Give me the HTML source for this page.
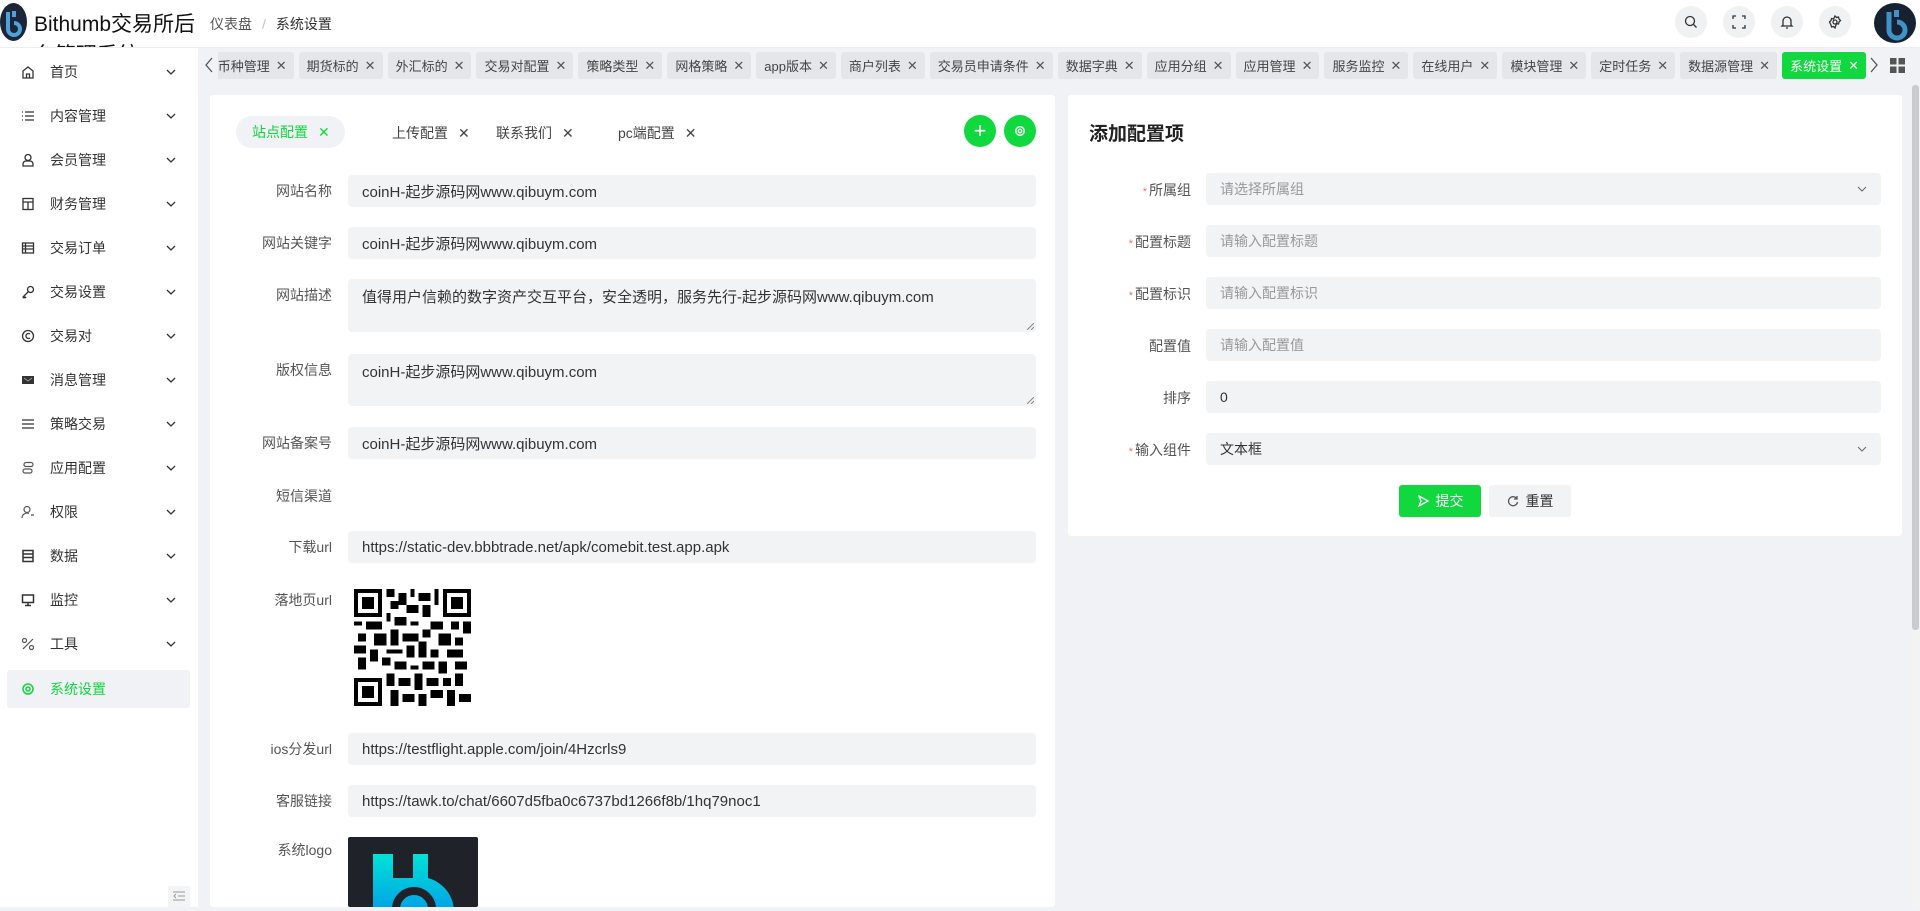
<!DOCTYPE html>
<html><head><meta charset="utf-8">
<style>
*{box-sizing:border-box;margin:0;padding:0}
body{width:1920px;height:907px;overflow:hidden;background:#f0f2f5;font-family:"Liberation Sans","Noto Sans CJK SC",sans-serif;position:relative;color:#303133}
.abs{position:absolute}
#hdr{left:0;top:0;width:1920px;height:48px;background:#fff;border-bottom:1px solid #eee;overflow:hidden}
.title{left:34px;top:9px;width:170px;font-size:21px;line-height:31px;color:#111}
.bc{left:210px;top:14px;font-size:14px;color:#555}
.bc span{color:#c0c4cc;margin:0 10px}
.bc b{font-weight:normal;color:#303133}
.hic{width:32px;height:32px;border-radius:50%;background:#f0f1f3;top:6px;display:flex;align-items:center;justify-content:center}
#side{left:0;top:48px;width:198px;height:859px;background:#fff}
.mi{position:absolute;left:7px;width:183px;height:38px;display:flex;align-items:center;font-size:14px;color:#333}
.mi svg.ic{position:absolute;left:14px}
.mi .t{position:absolute;left:43px}
.mi .ch{position:absolute;left:158px}
.mi.act{background:#f0f2f5;border-radius:3px;color:#10d83e}
#tabs{left:218px;top:52px;width:1648px;height:27px;overflow:hidden;display:flex;justify-content:flex-end;gap:5px}
.tab{flex:none;height:27px;background:#e4e6ea;border-radius:3px;display:flex;align-items:center;padding:0 7px 0 8px;font-size:13px;color:#444;white-space:nowrap}
.tab i{font-style:normal;margin-left:6px;font-size:13px;color:#555}
.tab.on{background:#10d83e;color:#fff}.tab.on i{color:#fff}
.card{background:#fff;border-radius:3px}
.lbl{position:absolute;font-size:14px;color:#555;text-align:right;width:120px}
.inp{position:absolute;background:#f2f3f5;border-radius:4px;font-size:15px;color:#333;padding-left:14px;display:flex;align-items:center;white-space:nowrap}
.ta{align-items:flex-start;padding-top:7px}
.ph{color:#999;font-size:14px}
.star{color:#f56c6c;font-size:11px;margin-right:2px}
.rh{position:absolute;right:2px;bottom:2px}
</style></head><body>

<div id="hdr" class="abs">
  <svg class="abs" style="left:0;top:3px" width="27" height="38" viewBox="0 0 27 38"><ellipse cx="13.5" cy="19" rx="13.5" ry="19" fill="#1c2638"/><path d="M8 9v17a6 6 0 1 0 6-6" fill="none" stroke="#4da3d9" stroke-width="4"/><rect x="12" y="8" width="4" height="6" fill="#4da3d9"/></svg>
  <div class="abs title">Bithumb交易所后台管理系统</div>
  <div class="abs bc">仪表盘<span>/</span><b>系统设置</b></div>
  <div class="abs hic" style="left:1675px"><svg width="14" height="14" viewBox="0 0 14 14" fill="none" stroke="#333" stroke-width="1.3"><circle cx="6" cy="6" r="4.5"/><path d="M9.5 9.5l3 3"/></svg></div>
  <div class="abs hic" style="left:1723px"><svg width="14" height="14" viewBox="0 0 14 14" fill="none" stroke="#333" stroke-width="1.3"><path d="M1 4V1h3M10 1h3v3M13 10v3h-3M4 13H1v-3"/></svg></div>
  <div class="abs hic" style="left:1771px"><svg width="14" height="14" viewBox="0 0 14 14" fill="none" stroke="#333" stroke-width="1.3"><path d="M3 10V6a4 4 0 0 1 8 0v4l1 1H2zM6 13h2"/></svg></div>
  <div class="abs hic" style="left:1819px"><svg width="14" height="14" viewBox="0 0 14 14" fill="none" stroke="#333" stroke-width="1.3"><circle cx="7" cy="7" r="2"/><path d="M7 1l1.5 1.5 2-.5.5 2 1.5 1.5-1.5 1.5-.5 2-2-.5L7 13l-1.5-1.5-2 .5-.5-2L1.5 7 3 5.5l.5-2 2 .5z"/></svg></div>
  <svg class="abs" style="left:1872px;top:2px" width="46" height="42" viewBox="0 0 46 42"><ellipse cx="23" cy="21" rx="21" ry="20" fill="#162232"/><path d="M17 10v18a8 8 0 1 0 8-8" fill="none" stroke="#3f93c8" stroke-width="5"/><rect x="22" y="8" width="5" height="7" fill="#3f93c8"/></svg>
</div>

<div id="side" class="abs">
  <div class="mi" style="top:5px"><svg class="ic" width="14" height="14" viewBox="0 0 14 14" fill="none" stroke="#333" stroke-width="1.3"><path d="M2 13V6l5-4 5 4v7zM5.5 13V9h3v4"/></svg><span class="t">首页</span><svg class="ch" width="12" height="12" viewBox="0 0 12 12" fill="none" stroke="#333" stroke-width="1.3"><path d="M2 4l4 4 4-4"/></svg></div>
  <div class="mi" style="top:49px"><svg class="ic" width="14" height="14" viewBox="0 0 14 14" fill="none" stroke="#333" stroke-width="1.3"><path d="M1 3h1M1 7h1M1 11h1M4 3h9M4 7h9M4 11h9"/></svg><span class="t">内容管理</span><svg class="ch" width="12" height="12" viewBox="0 0 12 12" fill="none" stroke="#333" stroke-width="1.3"><path d="M2 4l4 4 4-4"/></svg></div>
  <div class="mi" style="top:93px"><svg class="ic" width="14" height="14" viewBox="0 0 14 14" fill="none" stroke="#333" stroke-width="1.3"><circle cx="7" cy="4.5" r="3"/><path d="M2 13v-2a3 3 0 0 1 3-3h4a3 3 0 0 1 3 3v2z"/></svg><span class="t">会员管理</span><svg class="ch" width="12" height="12" viewBox="0 0 12 12" fill="none" stroke="#333" stroke-width="1.3"><path d="M2 4l4 4 4-4"/></svg></div>
  <div class="mi" style="top:137px"><svg class="ic" width="14" height="14" viewBox="0 0 14 14" fill="none" stroke="#333" stroke-width="1.3"><rect x="2" y="1.5" width="10" height="11"/><path d="M2 5h10M7 5v7.5"/></svg><span class="t">财务管理</span><svg class="ch" width="12" height="12" viewBox="0 0 12 12" fill="none" stroke="#333" stroke-width="1.3"><path d="M2 4l4 4 4-4"/></svg></div>
  <div class="mi" style="top:181px"><svg class="ic" width="14" height="14" viewBox="0 0 14 14" fill="none" stroke="#333" stroke-width="1.3"><rect x="1.5" y="2" width="11" height="10"/><path d="M1.5 5h11M1.5 8h11M4.5 2v10"/></svg><span class="t">交易订单</span><svg class="ch" width="12" height="12" viewBox="0 0 12 12" fill="none" stroke="#333" stroke-width="1.3"><path d="M2 4l4 4 4-4"/></svg></div>
  <div class="mi" style="top:225px"><svg class="ic" width="14" height="14" viewBox="0 0 14 14" fill="none" stroke="#333" stroke-width="1.3"><circle cx="9.5" cy="4.5" r="3"/><path d="M7.5 6.5L2 12l1 1 1-1 1 1"/></svg><span class="t">交易设置</span><svg class="ch" width="12" height="12" viewBox="0 0 12 12" fill="none" stroke="#333" stroke-width="1.3"><path d="M2 4l4 4 4-4"/></svg></div>
  <div class="mi" style="top:269px"><svg class="ic" width="14" height="14" viewBox="0 0 14 14" fill="none" stroke="#333" stroke-width="1.3"><circle cx="7" cy="7" r="5.5"/><path d="M9 5a2.5 2.5 0 1 0 0 4"/></svg><span class="t">交易对</span><svg class="ch" width="12" height="12" viewBox="0 0 12 12" fill="none" stroke="#333" stroke-width="1.3"><path d="M2 4l4 4 4-4"/></svg></div>
  <div class="mi" style="top:313px"><svg class="ic" width="14" height="14" viewBox="0 0 14 14"><rect x="1" y="3" width="12" height="8" fill="#333"/><path d="M3 5l4 3 4-3" fill="none" stroke="#999"/></svg><span class="t">消息管理</span><svg class="ch" width="12" height="12" viewBox="0 0 12 12" fill="none" stroke="#333" stroke-width="1.3"><path d="M2 4l4 4 4-4"/></svg></div>
  <div class="mi" style="top:357px"><svg class="ic" width="14" height="14" viewBox="0 0 14 14" fill="none" stroke="#333" stroke-width="1.3"><path d="M1 3h12M1 7h12M1 11h12"/></svg><span class="t">策略交易</span><svg class="ch" width="12" height="12" viewBox="0 0 12 12" fill="none" stroke="#333" stroke-width="1.3"><path d="M2 4l4 4 4-4"/></svg></div>
  <div class="mi" style="top:401px"><svg class="ic" width="14" height="14" viewBox="0 0 14 14" fill="none" stroke="#555" stroke-width="1.2"><rect x="3" y="1.5" width="9" height="4" rx="2"/><rect x="2" y="8" width="9" height="4" rx="2"/></svg><span class="t">应用配置</span><svg class="ch" width="12" height="12" viewBox="0 0 12 12" fill="none" stroke="#333" stroke-width="1.3"><path d="M2 4l4 4 4-4"/></svg></div>
  <div class="mi" style="top:445px"><svg class="ic" width="14" height="14" viewBox="0 0 14 14" fill="none" stroke="#555" stroke-width="1.2"><circle cx="6" cy="4.5" r="3"/><path d="M1 13a5 5 0 0 1 7-4.5M10 10h3"/></svg><span class="t">权限</span><svg class="ch" width="12" height="12" viewBox="0 0 12 12" fill="none" stroke="#333" stroke-width="1.3"><path d="M2 4l4 4 4-4"/></svg></div>
  <div class="mi" style="top:489px"><svg class="ic" width="14" height="14" viewBox="0 0 14 14" fill="none" stroke="#333" stroke-width="1.5"><rect x="2" y="1.5" width="10" height="11"/><path d="M2 5h10M2 8.5h10"/></svg><span class="t">数据</span><svg class="ch" width="12" height="12" viewBox="0 0 12 12" fill="none" stroke="#333" stroke-width="1.3"><path d="M2 4l4 4 4-4"/></svg></div>
  <div class="mi" style="top:533px"><svg class="ic" width="14" height="14" viewBox="0 0 14 14" fill="none" stroke="#333" stroke-width="1.5"><rect x="1.5" y="2" width="11" height="7.5"/><path d="M7 9.5V12M4 12.5h6"/></svg><span class="t">监控</span><svg class="ch" width="12" height="12" viewBox="0 0 12 12" fill="none" stroke="#333" stroke-width="1.3"><path d="M2 4l4 4 4-4"/></svg></div>
  <div class="mi" style="top:577px"><svg class="ic" width="14" height="14" viewBox="0 0 14 14" fill="none" stroke="#555" stroke-width="1.2"><circle cx="3.5" cy="3.5" r="2"/><circle cx="10.5" cy="10.5" r="2"/><path d="M12 2L2 12"/></svg><span class="t">工具</span><svg class="ch" width="12" height="12" viewBox="0 0 12 12" fill="none" stroke="#333" stroke-width="1.3"><path d="M2 4l4 4 4-4"/></svg></div>
  <div class="mi act" style="top:622px"><svg class="ic" width="14" height="14" viewBox="0 0 14 14" fill="none" stroke="#10d83e" stroke-width="1.5"><circle cx="7" cy="7" r="2"/><circle cx="7" cy="7" r="5"/></svg><span class="t">系统设置</span></div>
  <div class="abs" style="left:168px;top:838px;width:22px;height:21px;background:#f3f4f6;border-radius:2px"><svg style="margin:5px" width="12" height="10" viewBox="0 0 12 10" fill="none" stroke="#999"><path d="M0 1h12M5 5h7M0 9h12M3 3L1 5l2 2"/></svg></div>
</div>

<svg class="abs" style="left:204px;top:56px" width="10" height="18" viewBox="0 0 10 18" fill="none" stroke="#555" stroke-width="1.3"><path d="M8 2L2 9l6 7"/></svg>
<div id="tabs" class="abs">
  <div class="tab">币种管理<i>✕</i></div><div class="tab">期货标的<i>✕</i></div><div class="tab">外汇标的<i>✕</i></div><div class="tab">交易对配置<i>✕</i></div><div class="tab">策略类型<i>✕</i></div><div class="tab">网格策略<i>✕</i></div><div class="tab">app版本<i>✕</i></div><div class="tab">商户列表<i>✕</i></div><div class="tab">交易员申请条件<i>✕</i></div><div class="tab">数据字典<i>✕</i></div><div class="tab">应用分组<i>✕</i></div><div class="tab">应用管理<i>✕</i></div><div class="tab">服务监控<i>✕</i></div><div class="tab">在线用户<i>✕</i></div><div class="tab">模块管理<i>✕</i></div><div class="tab">定时任务<i>✕</i></div><div class="tab">数据源管理<i>✕</i></div><div class="tab on">系统设置<i>✕</i></div>
</div>
<svg class="abs" style="left:1869px;top:56px" width="10" height="18" viewBox="0 0 10 18" fill="none" stroke="#555" stroke-width="1.3"><path d="M2 2l6 7-6 7"/></svg>
<svg class="abs" style="left:1890px;top:58px" width="15" height="15" viewBox="0 0 15 15" fill="#555"><rect width="6.5" height="6.5"/><rect x="8.5" width="6.5" height="6.5"/><rect y="8.5" width="6.5" height="6.5"/><rect x="8.5" y="8.5" width="6.5" height="6.5"/></svg>

<div class="abs" style="left:198px;top:79px;width:1722px;height:16px;background:#f0f2f5"></div>
<div class="abs" style="left:1911px;top:85px;width:9px;height:822px;background:#f3f3f3"><div style="margin-left:1px;width:7px;height:545px;background:#c8cbd0;border-radius:3px"></div></div>

<div class="abs card" style="left:210px;top:95px;width:845px;height:812px">
  <div class="abs" style="left:26px;top:21px;width:109px;height:32px;border-radius:16px;background:#f0f2f5;font-size:14px;color:#10d83e;display:flex;align-items:center;padding-left:16px">站点配置<span style="margin-left:10px">✕</span></div>
  <div class="abs" style="left:182px;top:28px;font-size:14px;color:#444">上传配置<span style="margin-left:10px">✕</span></div>
  <div class="abs" style="left:286px;top:28px;font-size:14px;color:#444">联系我们<span style="margin-left:10px">✕</span></div>
  <div class="abs" style="left:408px;top:28px;font-size:14px;color:#444">pc端配置<span style="margin-left:10px">✕</span></div>
  <div class="abs" style="left:754px;top:20px;width:32px;height:32px;border-radius:50%;background:#10d83e;color:#fff;font-size:22px;line-height:31px;text-align:center">+</div>
  <div class="abs" style="left:794px;top:20px;width:32px;height:32px;border-radius:50%;background:#10d83e;display:flex;align-items:center;justify-content:center"><svg width="12" height="12" viewBox="0 0 14 14" fill="none" stroke="#fff" stroke-width="1.6"><circle cx="7" cy="7" r="2"/><circle cx="7" cy="7" r="5"/></svg></div>
</div>
<div class="lbl" style="left:212px;top:181px">网站名称</div><div class="inp" style="left:348px;top:175px;width:688px;height:32px">coinH-起步源码网www.qibuym.com</div>
<div class="lbl" style="left:212px;top:233px">网站关键字</div><div class="inp" style="left:348px;top:227px;width:688px;height:32px">coinH-起步源码网www.qibuym.com</div>
<div class="lbl" style="left:212px;top:285px">网站描述</div><div class="inp ta" style="left:348px;top:279px;width:688px;height:53px">值得用户信赖的数字资产交互平台，安全透明，服务先行-起步源码网www.qibuym.com<svg class="rh" width="7" height="7" viewBox="0 0 7 7" stroke="#888"><path d="M7 0L0 7M7 4L4 7"/></svg></div>
<div class="lbl" style="left:212px;top:360px">版权信息</div><div class="inp ta" style="left:348px;top:354px;width:688px;height:52px">coinH-起步源码网www.qibuym.com<svg class="rh" width="7" height="7" viewBox="0 0 7 7" stroke="#888"><path d="M7 0L0 7M7 4L4 7"/></svg></div>
<div class="lbl" style="left:212px;top:433px">网站备案号</div><div class="inp" style="left:348px;top:427px;width:688px;height:32px">coinH-起步源码网www.qibuym.com</div>
<div class="lbl" style="left:212px;top:486px">短信渠道</div>
<div class="lbl" style="left:212px;top:537px">下载url</div><div class="inp" style="left:348px;top:531px;width:688px;height:32px">https://static-dev.bbbtrade.net/apk/comebit.test.app.apk</div>
<div class="lbl" style="left:212px;top:590px">落地页url</div>
<svg class="abs" style="left:354px;top:589px" width="117" height="117" viewBox="0 0 29 29" shape-rendering="crispEdges"><rect width="29" height="29" fill="#fff"/><g fill="#000"><path d="M0 0h7v7H0zM22 0h7v7h-7zM0 22h7v7H0z"/></g><g fill="#fff"><path d="M1 1h5v5H1zM23 1h5v5h-5zM1 23h5v5H1z"/></g><g fill="#000"><path d="M2 2h3v3H2zM24 2h3v3h-3zM2 24h3v3H2z"/><path d="M8 0h2v2H8zM11 1h2v3h-2zM14 0h1v2h-1zM16 1h3v2h-3zM20 0h1v4h-1zM9 3h2v2H9zM13 4h3v2h-3zM17 4h2v3h-2zM8 6h1v2H8zM0 8h2v1H0zM3 8h4v2H3zM10 7h3v2h-3zM14 8h2v1h-2zM19 8h3v2h-3zM24 8h2v2h-2zM27 8h2v3h-2zM1 11h2v2H1zM5 11h3v3H5zM9 10h2v4H9zM12 11h4v2h-4zM17 10h2v2h-2zM21 11h3v3h-3zM25 12h2v2h-2zM0 14h3v2H0zM4 15h2v3H4zM8 15h4v1H8zM13 14h2v3h-2zM16 13h2v4h-2zM19 15h2v2h-2zM23 15h4v2h-4zM1 17h2v3H1zM7 17h2v2H7zM10 18h3v2h-3zM14 19h2v1h-2zM17 18h3v2h-3zM21 18h2v3h-2zM25 18h3v2h-3zM8 21h2v3H8zM11 22h3v2h-3zM15 21h2v4h-2zM18 22h3v2h-3zM22 22h2v2h-2zM25 21h2v3h-2zM9 25h2v4H9zM12 26h3v2h-3zM16 26h2v3h-2zM19 25h3v2h-3zM23 25h2v4h-2zM26 26h3v2h-3z"/></g></svg>
<div class="lbl" style="left:212px;top:739px">ios分发url</div><div class="inp" style="left:348px;top:733px;width:688px;height:32px">https://testflight.apple.com/join/4Hzcrls9</div>
<div class="lbl" style="left:212px;top:791px">客服链接</div><div class="inp" style="left:348px;top:785px;width:688px;height:32px">https://tawk.to/chat/6607d5fba0c6737bd1266f8b/1hq79noc1</div>
<div class="lbl" style="left:212px;top:840px">系统logo</div>
<div class="abs" style="left:348px;top:837px;width:130px;height:70px;background:#1f2229;border-radius:2px;overflow:hidden">
<svg width="130" height="70" viewBox="0 0 130 70"><defs><linearGradient id="g" x1="0" y1="0" x2="0" y2="1"><stop offset="0" stop-color="#00e3d6"/><stop offset="1" stop-color="#00a2e6"/></linearGradient></defs><path d="M25 17h20v24h20c0-12 0-24 0-24h15v24c14 4 25 16 26 32H25z" fill="url(#g)"/><circle cx="66" cy="72" r="18" fill="none" stroke="#1f2229" stroke-width="8"/></svg></div>

<div class="abs card" style="left:1068px;top:95px;width:834px;height:441px">
  <div class="abs" style="left:21px;top:24px;font-size:19px;font-weight:bold;color:#222">添加配置项</div>
</div>
<div class="lbl" style="left:1071px;top:180px"><span class="star">*</span>所属组</div><div class="inp ph" style="left:1206px;top:173px;width:675px;height:32px">请选择所属组<svg class="abs" style="right:14px;top:12px" width="10" height="8" viewBox="0 0 10 8" fill="none" stroke="#666"><path d="M1 2l4 4 4-4"/></svg></div>
<div class="lbl" style="left:1071px;top:232px"><span class="star">*</span>配置标题</div><div class="inp ph" style="left:1206px;top:225px;width:675px;height:32px">请输入配置标题</div>
<div class="lbl" style="left:1071px;top:284px"><span class="star">*</span>配置标识</div><div class="inp ph" style="left:1206px;top:277px;width:675px;height:32px">请输入配置标识</div>
<div class="lbl" style="left:1071px;top:336px">配置值</div><div class="inp ph" style="left:1206px;top:329px;width:675px;height:32px">请输入配置值</div>
<div class="lbl" style="left:1071px;top:388px">排序</div><div class="inp" style="left:1206px;top:381px;width:675px;height:32px;font-size:14px">0</div>
<div class="lbl" style="left:1071px;top:440px"><span class="star">*</span>输入组件</div><div class="inp" style="left:1206px;top:433px;width:675px;height:32px;font-size:14px">文本框<svg class="abs" style="right:14px;top:12px" width="10" height="8" viewBox="0 0 10 8" fill="none" stroke="#666"><path d="M1 2l4 4 4-4"/></svg></div>
<div class="abs" style="left:1399px;top:485px;width:82px;height:32px;background:#10d83e;border-radius:3px;color:#fff;font-size:14px;display:flex;align-items:center;justify-content:center"><svg width="12" height="12" viewBox="0 0 12 12" fill="none" stroke="#fff" stroke-width="1.3" style="margin-right:7px"><path d="M2 1l9 5-9 5 2-5z"/></svg>提交</div>
<div class="abs" style="left:1489px;top:485px;width:82px;height:32px;background:#f2f3f5;border-radius:3px;color:#333;font-size:14px;display:flex;align-items:center;justify-content:center"><svg width="12" height="12" viewBox="0 0 12 12" fill="none" stroke="#555" stroke-width="1.3" style="margin-right:7px"><path d="M10 4A4.5 4.5 0 1 0 10.5 7M10 1v3H7"/></svg>重置</div>
</body></html>
